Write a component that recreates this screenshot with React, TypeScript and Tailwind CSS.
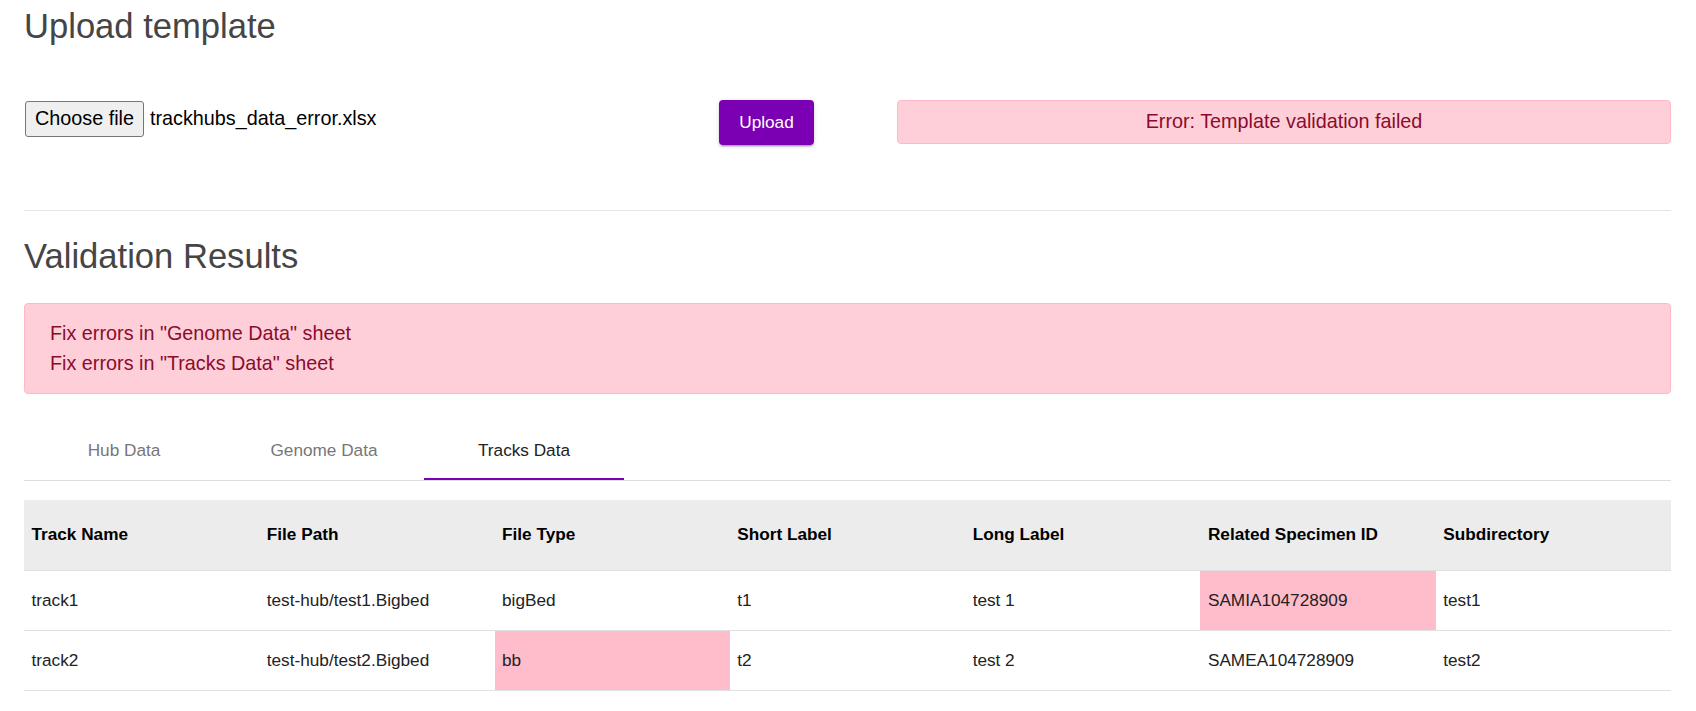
const columns = [
  "Track Name",
  "File Path",
  "File Type",
  "Short Label",
  "Long Label",
  "Related Specimen ID",
  "Subdirectory",
];

// cells flagged by the validator get a pink background
const rows = [
  { cells: ["track1", "test-hub/test1.Bigbed", "bigBed", "t1", "test 1", "SAMIA104728909", "test1"], bad: [5] },
  { cells: ["track2", "test-hub/test2.Bigbed", "bb", "t2", "test 2", "SAMEA104728909", "test2"], bad: [2] },
];

const tabs = ["Hub Data", "Genome Data", "Tracks Data"];

const App = () => {
  const active = 2;

  return (
    <div className="min-h-screen bg-white pl-6 pr-[25px] font-['Liberation_Sans',Arial,sans-serif] text-[#222]">
      <h1 className="pt-[6px] text-[34.6px] leading-[40px] font-normal text-[#454545]">
        Upload template
      </h1>

      <div className="mt-[54px] grid grid-cols-[695px_178px_1fr] items-start">
        <div className="flex items-center mt-[1px]">
          <button className="ml-[1px] h-[36px] w-[119px] flex items-center justify-center border border-[#767676] bg-[#efefef] rounded-[3px] text-[19.8px] leading-none text-black">
            Choose file
          </button>
          <span className="ml-[6px] text-[19.8px] text-black">trackhubs_data_error.xlsx</span>
        </div>

        <button className="h-[45px] w-[95px] rounded-[4px] bg-[#7b00b4] text-white text-[17.2px] shadow-[0_3px_1px_-2px_rgba(0,0,0,0.2),0_2px_2px_0_rgba(0,0,0,0.14),0_1px_5px_0_rgba(0,0,0,0.12)]">
          Upload
        </button>

        <div className="h-[44px] flex items-center justify-center rounded-[4px] border border-[#ffb8c6] bg-[#ffcfd9] text-[19.8px] text-[#8a0b2d]">
          Error: Template validation failed
        </div>
      </div>

      <hr className="mt-[65px] border-0 border-t border-[#e5e5e5]" />

      <h1 className="mt-[25px] text-[34.6px] leading-[40px] font-normal text-[#454545]">
        Validation Results
      </h1>

      <div className="mt-[27px] rounded-[4px] border border-[#ffb8c6] bg-[#ffcfd9] pl-[25px] pt-[14px] pb-[15px] text-[19.8px] leading-[30px] text-[#8a0b2d]">
        <div>Fix errors in "Genome Data" sheet</div>
        <div>Fix errors in "Tracks Data" sheet</div>
      </div>

      <div className="mt-[27px] flex h-[60px] border-b border-[#dedede]">
        {tabs.map((t, i) => (
          <div
            key={t}
            className={
              i === active
                ? "relative w-[200px] flex items-center justify-center text-[17.2px] text-[#222]"
                : "relative w-[200px] flex items-center justify-center text-[17.2px] text-[#777]"
            }
          >
            {t}
            {i === active && <div className="absolute left-0 right-0 bottom-0 h-[2px] bg-[#7b00b4]" />}
          </div>
        ))}
      </div>

      <div className="mt-[19px] grid grid-cols-7">
        {columns.map((c) => (
          <div
            key={c}
            className="h-[71px] flex items-center pl-[7.5px] bg-[#ececec] border-b border-[#e0e0e0] text-[17.2px] font-bold text-black"
          >
            {c}
          </div>
        ))}
        {rows.map((r) =>
          r.cells.map((v, j) => (
            <div
              key={r.cells[0] + j}
              className={
                r.bad.includes(j)
                  ? "h-[60px] flex items-center pl-[7.5px] bg-[#ffbcca] border-b border-[#e0e0e0] text-[17.2px] text-[#222]"
                  : "h-[60px] flex items-center pl-[7.5px] border-b border-[#e0e0e0] text-[17.2px] text-[#222]"
              }
            >
              {v}
            </div>
          ))
        )}
      </div>
    </div>
  );
};

export default App;
